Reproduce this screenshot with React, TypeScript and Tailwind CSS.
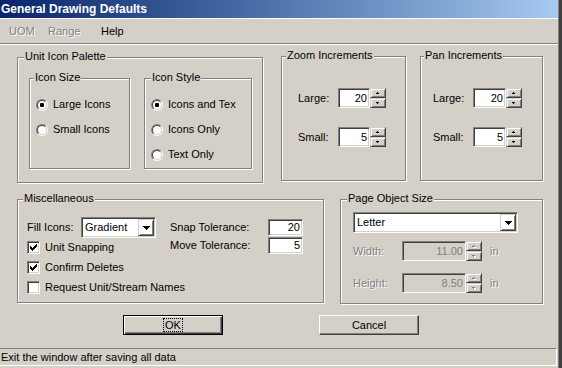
import React from 'react';

const ETCHED = 'relative border border-[#808080] shadow-[inset_1px_1px_0_#fff,1px_1px_0_#fff]';
const SUNKEN =
  'border border-t-[#808080] border-l-[#808080] border-b-white border-r-white shadow-[inset_1px_1px_0_#404040,inset_-1px_-1px_0_#d4d0c8]';
const RAISED_SMALL =
  'border border-t-[#d4d0c8] border-l-[#d4d0c8] border-b-[#404040] border-r-[#404040] shadow-[inset_1px_1px_0_#fff,inset_-1px_-1px_0_#808080]';
const DISABLED_TEXT = 'text-[#808080] [text-shadow:1px_1px_0_#fff]';

const Group: React.FC<{ label: string; labelPos: string; className: string; children?: React.ReactNode }> = ({
  label,
  labelPos,
  className,
  children,
}) => (
  <div className={`${ETCHED} ${className}`}>
    <span className={`absolute -top-[8px] ${labelPos} whitespace-nowrap bg-[#d4d0c8] px-[1px] leading-[13px]`}>
      {label}
    </span>
    {children}
  </div>
);

const Radio: React.FC<{ label: string; checked?: boolean }> = ({ label, checked }) => (
  <div className="flex h-[13px] items-center gap-[5px] whitespace-nowrap">
    <span className="h-[12px] w-[12px] shrink-0 rounded-full border border-t-[#808080] border-l-[#808080] border-b-white border-r-white">
      <span className="flex h-full w-full items-center justify-center rounded-full border border-t-[#404040] border-l-[#404040] border-b-[#d4d0c8] border-r-[#d4d0c8] bg-white">
        {checked && <span className="h-[4px] w-[4px] rounded-[1px] bg-black" />}
      </span>
    </span>
    <span>{label}</span>
  </div>
);

const Check: React.FC<{ label: string; checked?: boolean }> = ({ label, checked }) => (
  <div className="flex h-[13px] items-center gap-[5px] whitespace-nowrap">
    <span className={`flex h-[13px] w-[13px] shrink-0 items-center justify-center bg-white ${SUNKEN}`}>
      {checked && (
        <svg width="7" height="7" viewBox="0 0 7 7" shapeRendering="crispEdges">
          <path
            d="M0 2h1v3H0z M1 3h1v3H1z M2 4h1v3H2z M3 3h1v3H3z M4 2h1v3H4z M5 1h1v3H5z M6 0h1v3H6z"
            fill="#000"
          />
        </svg>
      )}
    </span>
    <span>{label}</span>
  </div>
);

const Arrow: React.FC<{ up?: boolean; disabled?: boolean }> = ({ up, disabled }) => {
  const d = up ? 'M1 0h1v1H1z M0 1h3v1H0z' : 'M0 0h3v1H0z M1 1h1v1H1z';
  return (
    <svg width="4" height="3" viewBox="0 0 4 3" shapeRendering="crispEdges">
      {disabled && <path d={d} fill="#fff" transform="translate(1 1)" />}
      <path d={d} fill={disabled ? '#808080' : '#000'} />
    </svg>
  );
};

const Spin: React.FC<{ disabled?: boolean }> = ({ disabled }) => (
  <div className="flex h-[20px] w-[16px] shrink-0 flex-col">
    <div className={`flex h-[10px] items-center justify-center ${RAISED_SMALL}`}>
      <Arrow up disabled={disabled} />
    </div>
    <div className={`flex h-[10px] items-center justify-center ${RAISED_SMALL}`}>
      <Arrow disabled={disabled} />
    </div>
  </div>
);

const Field: React.FC<{ value: string; className: string; disabled?: boolean }> = ({ value, className, disabled }) => (
  <div
    className={`flex shrink-0 items-center justify-end pr-[2px] ${SUNKEN} ${className} ${
      disabled ? 'bg-[#d4d0c8] text-[#808080]' : 'bg-white'
    }`}
  >
    {value}
  </div>
);

const Select: React.FC<{ value: string; className: string }> = ({ value, className }) => (
  <div className={`flex h-[21px] shrink-0 items-center bg-white p-[1px] ${SUNKEN} ${className}`}>
    <span className="flex-1 pl-[2px] text-[11px]">{value}</span>
    <div className={`flex h-[17px] w-[16px] items-center justify-center ${RAISED_SMALL}`}>
      <svg width="7" height="4" viewBox="0 0 7 4" shapeRendering="crispEdges">
        <path d="M0 0h7v1H0z M1 1h5v1H1z M2 2h3v1H2z M3 3h1v1H3z" fill="#000" />
      </svg>
    </div>
  </div>
);

const SpinRow: React.FC<{ label: string; value: string; fieldWidth: string }> = ({ label, value, fieldWidth }) => (
  <div className="flex h-[20px] items-center">
    <span className="w-[40px]">{label}</span>
    <Field value={value} className={`h-[20px] ${fieldWidth}`} />
    <Spin />
  </div>
);

export default function App() {
  return (
    <div className="flex h-[368px] w-[562px] overflow-hidden bg-[#d4d0c8] font-['Liberation_Sans',Arial,sans-serif] text-[11px] leading-[13px] text-black select-none">
      <div className="flex w-[558px] flex-col">
        {/* title bar */}
        <div className="flex h-[18px] items-center bg-linear-to-r from-[#0a246a] to-[#a6caf0] pl-[1px] text-[12px] font-bold text-white">
          General Drawing Defaults
        </div>
        <div className="h-px bg-white" />

        {/* menu */}
        <div className="flex h-[24px] items-center pl-[9px]">
          <span className={`w-[39px] ${DISABLED_TEXT}`}>UOM</span>
          <span className={`w-[53px] ${DISABLED_TEXT}`}>Range</span>
          <span>Help</span>
        </div>
        <div className="h-px bg-[#808080]" />
        <div className="h-px bg-white" />

        <div className="flex flex-col pl-[17px]">
          <div className="flex h-[138px] items-start">
            <Group label="Unit Icon Palette" labelPos="left-[6px]" className="mt-[12px] h-[126px] w-[246px] pl-[11px] pt-[20px]">
              <div className="flex items-start gap-[14px]">
                <Group label="Icon Size" labelPos="left-[4px]" className="h-[91px] w-[101px] pl-[6px] pt-[19px]">
                  <div className="flex flex-col gap-[12px]">
                    <Radio label="Large Icons" checked />
                    <Radio label="Small Icons" />
                  </div>
                </Group>
                <Group label="Icon Style" labelPos="left-[6px]" className="h-[91px] w-[108px] pl-[6px] pt-[19px]">
                  <div className="flex flex-col gap-[12px]">
                    <Radio label="Icons and Tex" checked />
                    <Radio label="Icons Only" />
                    <Radio label="Text Only" />
                  </div>
                </Group>
              </div>
            </Group>

            <Group label="Zoom Increments" labelPos="left-[4px]" className="ml-[18px] mt-[11px] h-[125px] w-[125px] pl-[16px] pt-[31px]">
              <div className="flex flex-col gap-[19px]">
                <SpinRow label="Large:" value="20" fieldWidth="w-[32px]" />
                <SpinRow label="Small:" value="5" fieldWidth="w-[32px]" />
              </div>
            </Group>

            <Group label="Pan Increments" labelPos="left-[3px]" className="ml-[14px] mt-[11px] h-[125px] w-[123px] pl-[12px] pt-[31px]">
              <div className="flex flex-col gap-[19px]">
                <SpinRow label="Large:" value="20" fieldWidth="w-[33px]" />
                <SpinRow label="Small:" value="5" fieldWidth="w-[33px]" />
              </div>
            </Group>
          </div>

          <div className="mt-[16px] flex h-[105px] items-start">
            <Group label="Miscellaneous" labelPos="left-[5px]" className="h-[104px] w-[307px] pl-[9px] pt-[17px]">
              <div className="flex items-start">
                <div className="flex w-[143px] shrink-0 flex-col">
                  <div className="flex h-[21px] items-center">
                    <span className="w-[54px] shrink-0">Fill Icons:</span>
                    <Select value="Gradient" className="w-[75px]" />
                  </div>
                  <div className="mt-[3px] flex flex-col gap-[7px]">
                    <Check label="Unit Snapping" checked />
                    <Check label="Confirm Deletes" checked />
                    <Check label="Request Unit/Stream Names" />
                  </div>
                </div>
                <div className="mt-[2px] flex flex-col gap-[1px]">
                  <div className="flex h-[17px] items-center">
                    <span className="w-[98px]">Snap Tolerance:</span>
                    <Field value="20" className="h-[17px] w-[35px]" />
                  </div>
                  <div className="flex h-[17px] items-center">
                    <span className="w-[98px]">Move Tolerance:</span>
                    <Field value="5" className="h-[17px] w-[35px]" />
                  </div>
                </div>
              </div>
            </Group>

            <Group label="Page Object Size" labelPos="left-[6px]" className="ml-[16px] h-[105px] w-[203px] pl-[12px] pt-[12px]">
              <Select value="Letter" className="w-[165px]" />
              <div className="mt-[8px] flex flex-col gap-[12px]">
                <div className="flex h-[20px] items-center">
                  <span className={`w-[49px] ${DISABLED_TEXT}`}>Width:</span>
                  <Field value="11.00" className="h-[20px] w-[64px]" disabled />
                  <Spin disabled />
                  <span className={`ml-[8px] ${DISABLED_TEXT}`}>in</span>
                </div>
                <div className="flex h-[20px] items-center">
                  <span className={`w-[49px] ${DISABLED_TEXT}`}>Height:</span>
                  <Field value="8.50" className="h-[20px] w-[64px]" disabled />
                  <Spin disabled />
                  <span className={`ml-[8px] ${DISABLED_TEXT}`}>in</span>
                </div>
              </div>
            </Group>
          </div>
        </div>

        {/* buttons */}
        <div className="mt-[11px] flex h-[20px] gap-[96px] pl-[123px]">
          <button className="flex h-[20px] w-[100px] items-center justify-center border border-black shadow-[inset_1px_1px_0_#fff,inset_-1px_-1px_0_#404040,inset_-2px_-2px_0_#808080]">
            <span className="border border-dotted border-black px-[1px] leading-[12px]">OK</span>
          </button>
          <button className="flex h-[20px] w-[100px] items-center justify-center border border-t-white border-l-white border-b-[#404040] border-r-[#404040] shadow-[inset_-1px_-1px_0_#808080]">
            Cancel
          </button>
        </div>

        {/* status bar */}
        <div className="mt-[13px] flex h-[18px] w-[557px] items-center border-t border-r border-b border-t-[#808080] border-r-white border-b-white pl-[1px] pt-[1px]">
          Exit the window after saving all data
        </div>
      </div>
      <div className="w-[4px] border-l border-[#808080] bg-[#404040]" />
    </div>
  );
}
